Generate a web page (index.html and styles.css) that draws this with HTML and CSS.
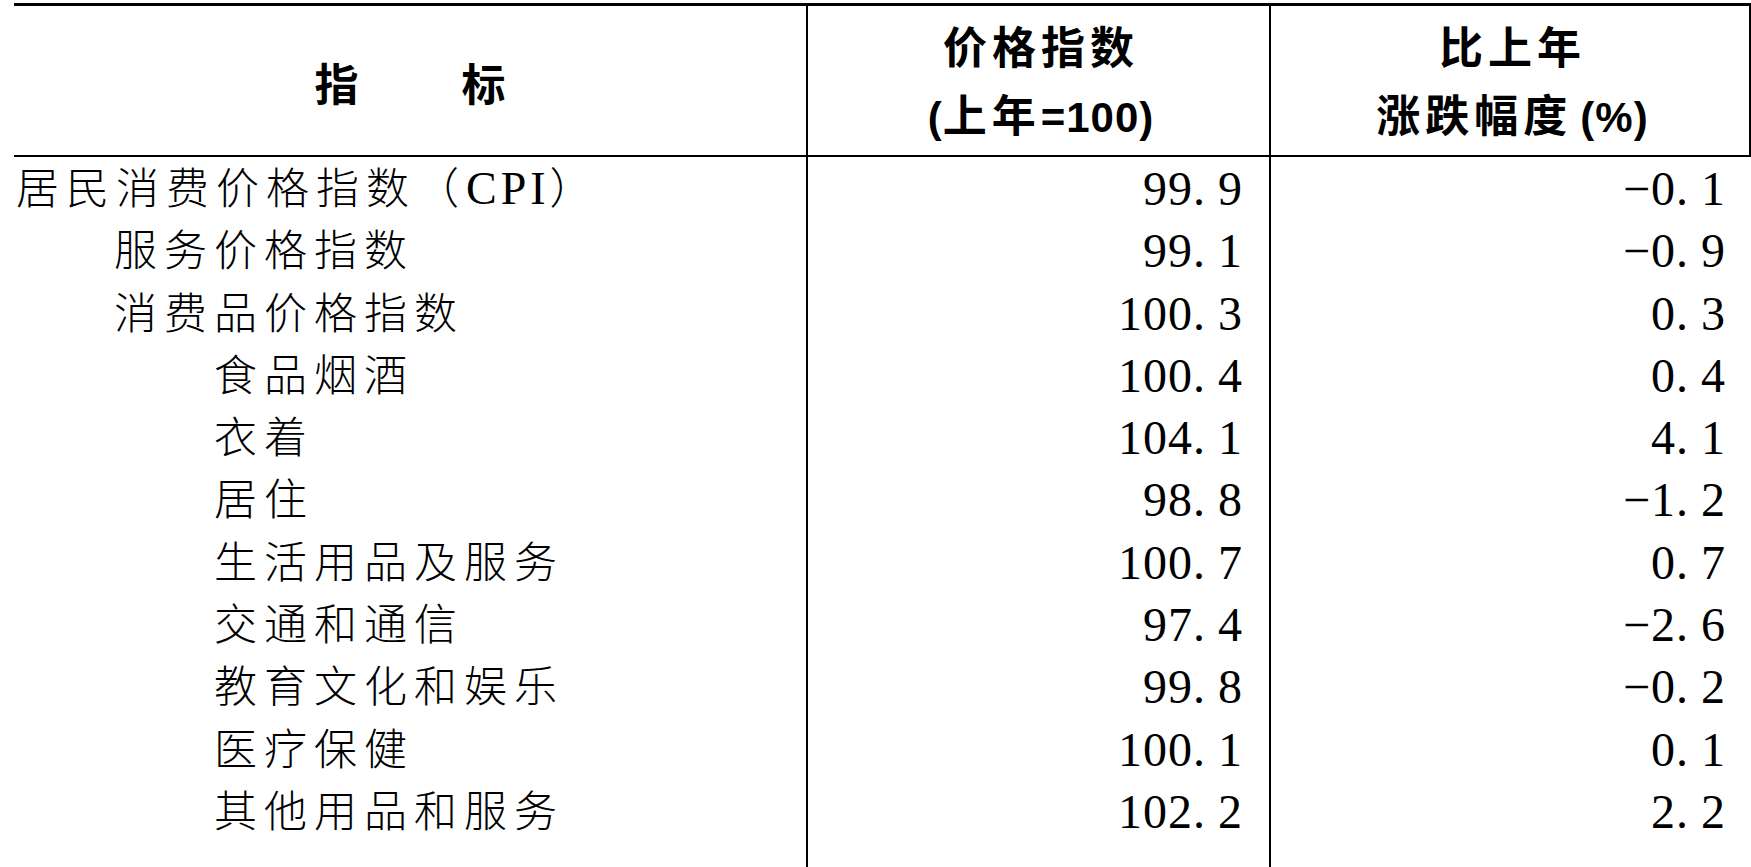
FILE: index.html
```html
<!DOCTYPE html>
<html lang="zh-CN">
<head>
<meta charset="utf-8">
<title>居民消费价格指数</title>
<link rel="stylesheet" href="styles.css">
</head>
<body>
<div class="table">
  <div class="head">
    <div class="hcell c1"><span class="ht">指　　标</span></div>
    <div class="hcell c2"><span class="ht">价格指数</span><span class="ht"><span class="hl">(</span>上年<span class="hl">=100)</span></span></div>
    <div class="hcell c3"><span class="ht">比上年</span><span class="ht">涨跌幅度<span class="hl gap">(%)</span></span></div>
  </div>
  <div class="body">
    <div class="col names">
      <div class="row l0">居民消费价格指数（<span class="lat">CPI</span>）</div>
      <div class="row l1">服务价格指数</div>
      <div class="row l1">消费品价格指数</div>
      <div class="row l2">食品烟酒</div>
      <div class="row l2">衣着</div>
      <div class="row l2">居住</div>
      <div class="row l2">生活用品及服务</div>
      <div class="row l2">交通和通信</div>
      <div class="row l2">教育文化和娱乐</div>
      <div class="row l2">医疗保健</div>
      <div class="row l2">其他用品和服务</div>
    </div>
    <div class="col nums c2">
      <div class="row">99<span class="pt">.</span>9</div>
      <div class="row">99<span class="pt">.</span>1</div>
      <div class="row">100<span class="pt">.</span>3</div>
      <div class="row">100<span class="pt">.</span>4</div>
      <div class="row">104<span class="pt">.</span>1</div>
      <div class="row">98<span class="pt">.</span>8</div>
      <div class="row">100<span class="pt">.</span>7</div>
      <div class="row">97<span class="pt">.</span>4</div>
      <div class="row">99<span class="pt">.</span>8</div>
      <div class="row">100<span class="pt">.</span>1</div>
      <div class="row">102<span class="pt">.</span>2</div>
    </div>
    <div class="col nums c3">
      <div class="row">−0<span class="pt">.</span>1</div>
      <div class="row">−0<span class="pt">.</span>9</div>
      <div class="row">0<span class="pt">.</span>3</div>
      <div class="row">0<span class="pt">.</span>4</div>
      <div class="row">4<span class="pt">.</span>1</div>
      <div class="row">−1<span class="pt">.</span>2</div>
      <div class="row">0<span class="pt">.</span>7</div>
      <div class="row">−2<span class="pt">.</span>6</div>
      <div class="row">−0<span class="pt">.</span>2</div>
      <div class="row">0<span class="pt">.</span>1</div>
      <div class="row">2<span class="pt">.</span>2</div>
    </div>
  </div>
</div>
</body>
</html>
```

FILE: styles.css
```css
html, body {
  margin: 0;
  padding: 0;
  background: #fff;
  color: #000;
  height: 100%;
  overflow: hidden;
}

.table {
  margin: 3px 0 0 14px;
  height: calc(100vh - 3px);
  display: flex;
  flex-direction: column;
  border-top: 3px solid #000;
  box-sizing: border-box;
}

.head, .body {
  display: grid;
  grid-template-columns: 792px 463px 1fr;
}

.head {
  height: 151px;
  border-bottom: 2px solid #000;
  box-sizing: border-box;
}

.hcell {
  display: flex;
  flex-direction: column;
  align-items: center;
  justify-content: center;
  font-family: "Noto Sans CJK SC", "Noto Sans", sans-serif;
  font-weight: 700;
  font-size: 44px;
  line-height: 68px;
  padding-top: 2px;
  box-sizing: border-box;
}

.ht {
  letter-spacing: 5px;
  margin-right: -5px;
  white-space: nowrap;
}

.hl {
  font-family: "Liberation Sans Narrow", "Liberation Sans", sans-serif;
  font-weight: 700;
  font-size: 42px;
  letter-spacing: 1px;
}

.hl.gap {
  margin-left: 8px;
}

.c2, .c3 {
  border-left: 2px solid #000;
}

.hcell.c3 {
  border-right: 2px solid #000;
}

.body {
  flex: 1;
}

.col {
  display: flex;
  flex-direction: column;
  padding-top: 1px;
}

.names {
  margin-top: -4px;
}

.row {
  height: 62.3px;
  line-height: 62.3px;
  white-space: nowrap;
}

.names .row {
  font-family: "Noto Sans CJK SC", "Noto Sans", sans-serif;
  font-weight: 300;
  font-size: 43px;
  letter-spacing: 7px;
}

.lat {
  font-family: "Liberation Serif", "Times New Roman", serif;
  font-weight: 400;
  font-size: 46px;
  letter-spacing: 4px;
}

.l0 { padding-left: 2px; }
.l1 { padding-left: 100px; }
.l2 { padding-left: 200px; }

.nums .row {
  font-family: "Liberation Serif", "Times New Roman", serif;
  font-size: 48px;
  letter-spacing: 1px;
  text-align: right;
}

.nums.c2 .row { padding-right: 26px; }
.nums.c3 .row { padding-right: 25px; }

.pt {
  margin-right: 12px;
}
```
